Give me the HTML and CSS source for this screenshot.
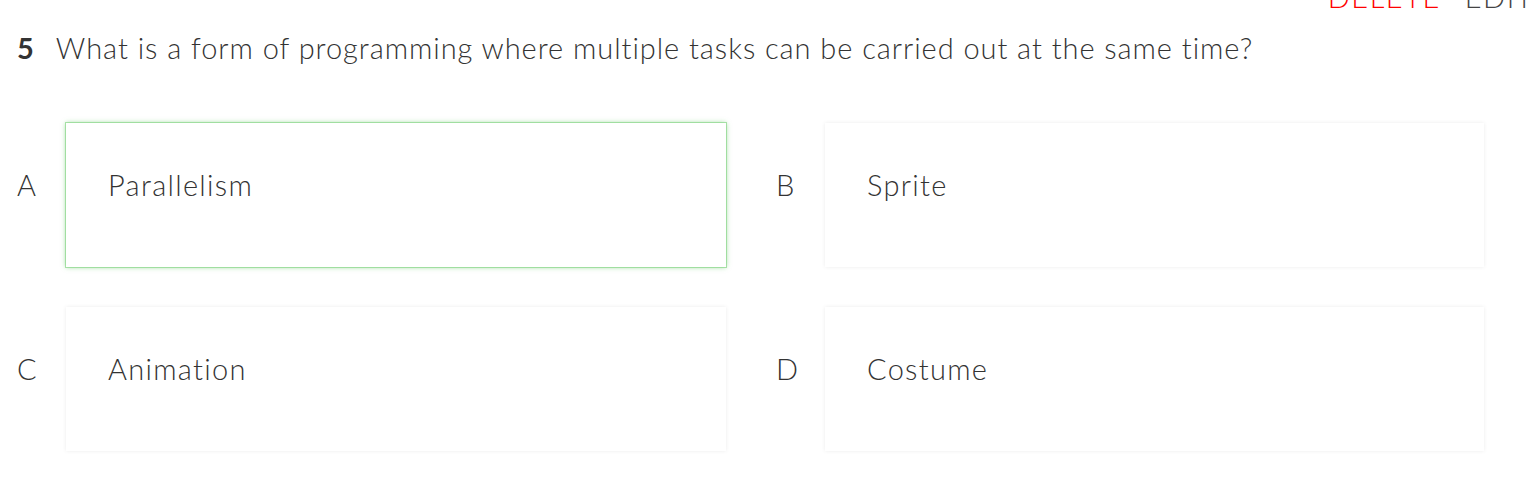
FILE: index.html
```html
<!DOCTYPE html>
<html>
<head>
<meta charset="utf-8">
<link rel="stylesheet" href="styles.css">
</head>
<body>
<div class="page">
  <div class="actions">
    <span class="action delete">DELETE</span>
    <span class="action edit">EDIT</span>
  </div>
  <div class="question">
    <span class="qnum">5</span>
    <span class="qtext">What is a form of programming where multiple tasks can be carried out at the same time?</span>
  </div>
  <div class="options">
    <div class="option">
      <span class="letter">A</span>
      <div class="card correct">Parallelism</div>
    </div>
    <div class="option">
      <span class="letter">B</span>
      <div class="card">Sprite</div>
    </div>
    <div class="option">
      <span class="letter">C</span>
      <div class="card">Animation</div>
    </div>
    <div class="option">
      <span class="letter">D</span>
      <div class="card">Costume</div>
    </div>
  </div>
</div>
</body>
</html>
```

FILE: styles.css
```css
html, body {
  margin: 0;
  padding: 0;
  background: #ffffff;
}
html {
  overflow: hidden;
}
body {
  font-family: Lato, "Open Sans", sans-serif;
  color: #333333;
}
.page {
  padding: 0 42px 30px 17px;
  overflow: hidden;
}
.actions {
  display: flex;
  justify-content: flex-end;
  gap: 24px;
  margin-top: -18px;
  margin-right: -50px;
  height: 30px;
  font-size: 29px;
  font-weight: 300;
  line-height: 30px;
  letter-spacing: 1.5px;
}
.delete { color: #ff0000; }
.edit { color: #444444; }
.question {
  display: flex;
  align-items: baseline;
  gap: 22px;
  margin-top: 16px;
  font-size: 29px;
  line-height: 40px;
}
.qnum {
  font-weight: 700;
  color: #333333;
}
.qtext {
  font-weight: 300;
  color: #333333;
  letter-spacing: 0.95px;
}
.options {
  display: grid;
  grid-template-columns: 709px 708px;
  column-gap: 50px;
  row-gap: 40px;
  margin-top: 55px;
}
.option {
  display: flex;
  align-items: stretch;
}
.letter {
  width: 49px;
  flex: none;
  font-size: 29px;
  font-weight: 300;
  line-height: 40px;
  padding-top: 42px;
}
.card {
  flex: 1;
  height: 144px;
  box-sizing: border-box;
  padding: 42px 42px 0;
  font-size: 29px;
  font-weight: 300;
  line-height: 40px;
  letter-spacing: 1.3px;
  background: #ffffff;
  box-shadow: 0 0 4px rgba(0, 0, 0, 0.08);
}
.card.correct {
  box-shadow: 0 0 0 1px rgba(140, 215, 140, 0.7), 0 0 5px rgba(70, 190, 70, 0.6);
}
```
